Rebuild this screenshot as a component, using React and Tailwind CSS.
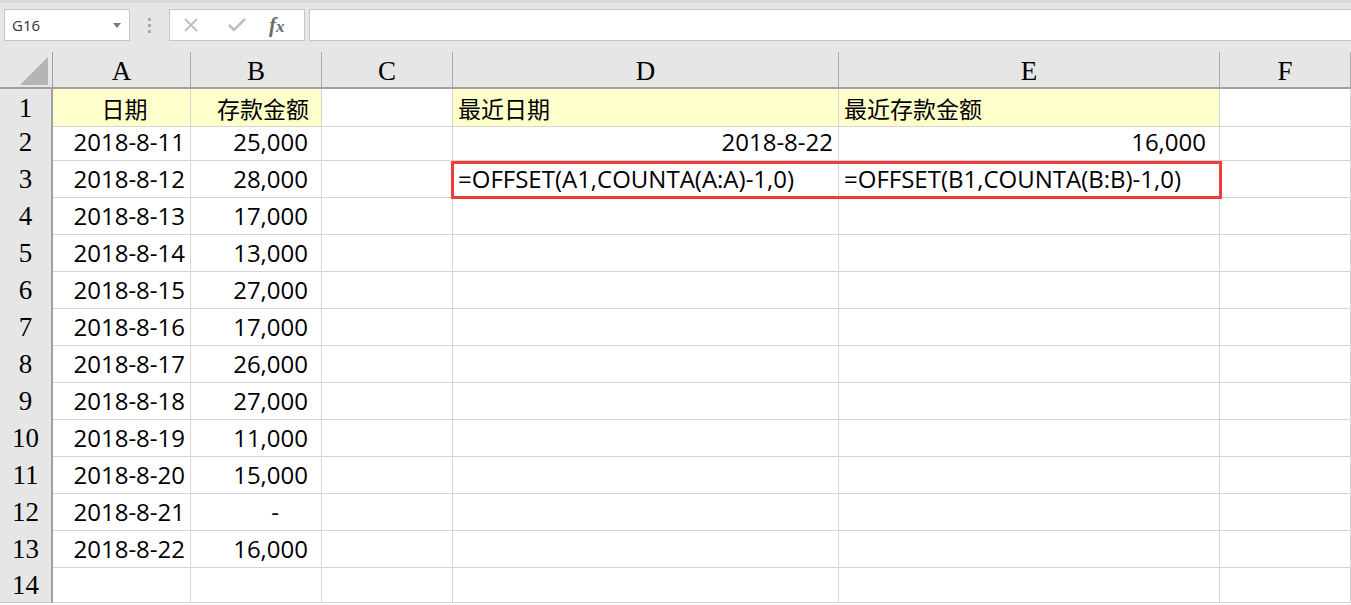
import React from 'react';

const cols = ['A', 'B', 'C', 'D', 'E', 'F'];

// cell data: [A, B, D, E]
const rows = [
  ['日期', '存款金额', '最近日期', '最近存款金额'],
  ['2018-8-11', '25,000', '2018-8-22', '16,000'],
  ['2018-8-12', '28,000', '=OFFSET(A1,COUNTA(A:A)-1,0)', '=OFFSET(B1,COUNTA(B:B)-1,0)'],
  ['2018-8-13', '17,000'],
  ['2018-8-14', '13,000'],
  ['2018-8-15', '27,000'],
  ['2018-8-16', '17,000'],
  ['2018-8-17', '26,000'],
  ['2018-8-18', '27,000'],
  ['2018-8-19', '11,000'],
  ['2018-8-20', '15,000'],
  ['2018-8-21', '-'],
  ['2018-8-22', '16,000'],
  [],
];

const cjk = 'font-["Noto_Sans_CJK_SC",sans-serif] text-[23px]';
const num = 'font-["Open_Sans","Noto_Sans_CJK_SC",sans-serif] text-[24px]';
const gridCols = 'grid grid-cols-[53px_138px_131px_131px_386px_381px_131px]';

const FormulaBar = () => (
  <div className="h-[52px] bg-[#e6e6e6] border-t-[3px] border-[#dadada] flex items-start pt-[6px] pl-[4px]">
    {/* name box */}
    <div className="w-[126px] h-[32px] bg-white border border-[#c6c6c6] flex items-center justify-between pl-[7px] pr-[8px]">
      <span className="font-['Open_Sans',sans-serif] text-[15px] text-[#333]">G16</span>
      <svg width="8" height="5" viewBox="0 0 8 5"><path d="M0 0h8L4 5z" fill="#7a7a7a" /></svg>
    </div>
    <div className="w-[39px] h-[32px] flex flex-col items-center justify-center gap-[3px]">
      <span className="w-[3px] h-[3px] bg-[#a8a8a8]" />
      <span className="w-[3px] h-[3px] bg-[#a8a8a8]" />
      <span className="w-[3px] h-[3px] bg-[#a8a8a8]" />
    </div>
    {/* cancel / enter / fx */}
    <div className="w-[136px] h-[32px] bg-white border border-[#c6c6c6] flex items-center pl-[13px] gap-[29px]">
      <svg width="16" height="16" viewBox="0 0 16 16"><path d="M2 2L14 14M14 2L2 14" stroke="#bdbdbd" strokeWidth="1.8" /></svg>
      <svg width="18" height="16" viewBox="0 0 18 16"><path d="M1 8l5 5L17 2" stroke="#bdbdbd" strokeWidth="2.6" fill="none" /></svg>
      <span className="font-['Liberation_Serif',serif] italic font-bold text-[21px] text-[#6b6b6b] -ml-[6px] leading-none">
        f<span className="text-[17px]">x</span>
      </span>
    </div>
    <div className="flex-1 ml-[4px] h-[32px] bg-white border border-[#c6c6c6] border-r-0" />
  </div>
);

const Header = () => (
  <div className={`${gridCols} h-[37px] bg-[#e6e6e6]`}>
    <div className="relative border-r border-b-2 border-[#a0a0a0]">
      <svg className="absolute left-[20px] top-[5px]" width="28" height="28" viewBox="0 0 28 28"><path d="M28 0V28H0z" fill="#b4b4b4" /></svg>
    </div>
    {cols.map((c) => (
      <div
        key={c}
        className="flex items-center justify-center pt-[4px] border-r border-[#ababab] border-b-2 border-b-[#a0a0a0] font-['Liberation_Serif',serif] text-[27px] text-black leading-none"
      >
        {c}
      </div>
    ))}
  </div>
);

const Cell = ({ children, className = '' }) => (
  <div className={`flex items-center pt-[2px] border-r border-b border-[#d4d4d4] whitespace-nowrap text-black ${className}`}>
    {children}
  </div>
);

const isCjk = (s) => s && /[\u4e00-\u9fff]/.test(s);

const App = () => (
  <div className="w-[1351px] h-[605px] overflow-hidden bg-white relative">
    <FormulaBar />
    <Header />
    {rows.map((r, i) => {
      const first = i === 0;
      const [a, b, d, e] = r;
      const yellow = first ? 'bg-[#ffffcc]' : '';
      return (
        <div key={i} className={`${gridCols} ${first ? 'h-[33px]' : 'h-[37px]'}`}>
          <div className="flex items-center justify-center pt-[2px] bg-[#e6e6e6] border-r-2 border-r-[#a0a0a0] border-b border-b-[#c8c8c8] font-['Liberation_Serif',serif] text-[27px] leading-none">
            {i + 1}
          </div>
          <Cell className={`${yellow} ${first ? 'justify-center pl-[6px] ' + cjk : 'justify-end pr-[5px] ' + num}`}>{a}</Cell>
          <Cell className={`${yellow} ${first ? 'justify-center pl-[14px] ' + cjk : b === '-' ? 'justify-end pr-[42px] ' + num : 'justify-end pr-[13px] ' + num}`}>{b}</Cell>
          <Cell />
          <Cell className={`${yellow} ${i === 1 ? 'justify-end pr-[5px]' : 'pl-[5px]'} ${isCjk(d) ? cjk : num}`}>{d}</Cell>
          <Cell className={`${yellow} ${i === 1 ? 'justify-end pr-[13px]' : 'pl-[5px]'} ${isCjk(e) ? cjk : num}`}>{e}</Cell>
          <Cell />
        </div>
      );
    })}
    {/* highlight box over D3:E3 */}
    <div className="absolute left-[451px] top-[161px] w-[771px] h-[38px] border-[3px] border-[#ee3b3b] pointer-events-none" />
  </div>
);

export default App;
